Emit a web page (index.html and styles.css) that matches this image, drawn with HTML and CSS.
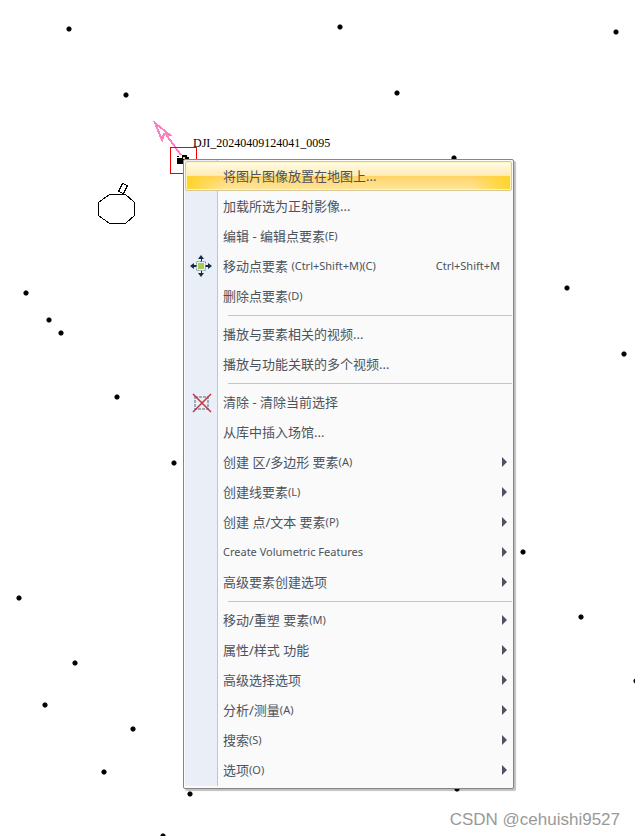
FILE: index.html
```
<!DOCTYPE html>
<html lang="zh-CN">
<head>
  <meta charset="UTF-8">
  <title>地图</title>
  <meta name="viewport" content="width=device-width, initial-scale=1.0">
  <link rel="stylesheet" href="styles.css">
</head>
<body>
  <main class="map">
    <svg class="map-canvas" aria-hidden="true">
      <defs>
        <path id="pt" class="point" d="M-1 -2.500h2l1.500 1.500v2l-1.500 1.500h-2l-1.500-1.500v-2z"/>
      </defs>
      <g id="points"></g>
      <!-- 相机朝向 -->
      <path class="heading" d="M155 123l15 12-6-1-2 6zM165 133l16 22"/>
      <!-- 选中的照片 -->
      <path class="selected" d="M170.500 147.500h26v26h-26z"/>
      <path d="M177 158h6v-1h6v7h-12zM177 156h2v1h-2zM182 155h5v3h-5z"/>
      <path fill="#e8d84a" d="M183 157h2v2h-2z"/>
      <path class="outline" d="M109.500 194.500h16l9 8v13l-9 8h-16l-11-8v-13zM118.500 191.500l4-8 5 2-4 8z"/>
    </svg>
    <div class="photo-name">DJI_20240409124041_0095</div>

    <ul class="menu">
      <li><button class="item active">将图片图像放置在地图上...</button></li>
      <li><button class="item">加载所选为正射影像...</button></li>
      <li><button class="item">编辑 - 编辑点要素<span class="key">(E)</span></button></li>
      <li><button class="item"><svg class="icon" viewBox="0 0 22 22" aria-hidden="true">
          <path fill="#0f2d46" d="M11 0l3 4h-2v3h-1v-3h-3zM11 22l3-4h-2v-3h-1v3h-3zM0 11l4-3v2h3v2h-3v2zM22 11l-4-3v2h-3v2h3v2z"/>
          <path fill="none" stroke="#8796a5" stroke-dasharray="2 1" d="M6.500 6.500h9v9h-9z"/>
          <path fill="#a9cb52" d="M8 8h6v6h-6z"/>
        </svg>移动点要素 <span class="key">(Ctrl+Shift+M)(C)</span><span class="shortcut">Ctrl+Shift+M</span></button></li>
      <li><button class="item">删除点要素<span class="key">(D)</span></button></li>
      <li class="line"></li>
      <li><button class="item">播放与要素相关的视频...</button></li>
      <li><button class="item">播放与功能关联的多个视频...</button></li>
      <li class="line"></li>
      <li><button class="item"><svg class="icon" viewBox="0 0 22 22" aria-hidden="true">
          <path fill="none" stroke="#8294ad" stroke-width="1.500" stroke-dasharray="3 1" d="M5 6h13v12h-13z"/>
          <path fill="none" stroke="#c8333a" stroke-width="1.500" d="M3 3l18 18M21 3l-18 18"/>
        </svg>清除 - 清除当前选择</button></li>
      <li><button class="item">从库中插入场馆...</button></li>
      <li><button class="item sub">创建 区/多边形 要素<span class="key">(A)</span></button></li>
      <li><button class="item sub">创建线要素<span class="key">(L)</span></button></li>
      <li><button class="item sub">创建 点/文本 要素<span class="key">(P)</span></button></li>
      <li><button class="item sub"><span class="latin">Create Volumetric Features</span></button></li>
      <li><button class="item sub">高级要素创建选项</button></li>
      <li class="line"></li>
      <li><button class="item sub">移动/重塑 要素<span class="key">(M)</span></button></li>
      <li><button class="item sub">属性/样式 功能</button></li>
      <li><button class="item sub">高级选择选项</button></li>
      <li><button class="item sub">分析/测量<span class="key">(A)</span></button></li>
      <li><button class="item sub">搜索<span class="key">(S)</span></button></li>
      <li><button class="item sub">选项<span class="key">(O)</span></button></li>
    </ul>

    <div class="watermark">CSDN @cehuishi9527</div>
  </main>

  <script>
    // 航点的屏幕坐标
    var points = [
      [69, 29], [340, 27], [616, 32], [126, 95], [397, 93], [454, 158],
      [26, 293], [49, 320], [61, 333], [117, 397], [174, 463], [567, 288],
      [624, 354], [523, 552], [581, 617], [636, 681], [19, 598], [75, 663],
      [45, 705], [133, 729], [104, 772], [190, 794], [163, 836], [457, 789]
    ];
    var html = '';
    for (var i = 0; i < points.length; i++) {
      html += '<use href="#pt" x="' + points[i][0] + '" y="' + points[i][1] + '"/>';
    }
    document.getElementById('points').innerHTML = html;
  </script>
</body>
</html>
```
FILE: styles.css
```
body {
  margin: 0;
  background-color: #fff;
  font-family: "Noto Sans", "Noto Sans CJK SC", sans-serif;
}

.map {
  position: relative;
  min-height: 100vh;
  overflow: hidden;
}

.map-canvas {
  position: absolute;
  top: 0;
  left: 0;
  width: 100%;
  height: 100%;
  shape-rendering: crispEdges;
}

.point {
  shape-rendering: geometricPrecision;
}

.heading {
  fill: none;
  stroke: #ff80c0;
  stroke-width: 2;
}

.selected {
  fill: none;
  stroke: #f00000;
}

.outline {
  fill: none;
  stroke: #000;
}

.photo-name {
  position: absolute;
  top: 135px;
  left: 193px;
  font-family: "Liberation Serif", serif;
  font-size: 12px;
  line-height: 16px;
  color: #000;
}

.menu {
  position: absolute;
  top: 159px;
  left: 183px;
  width: 329px;
  margin: 0;
  padding: 1px 0 3px;
  list-style: none;
  border: 1px solid #868686;
  border-radius: 2px;
  background: linear-gradient(#c5c5c5, #c5c5c5) 33px 0 / 1px calc(100% - 2px) no-repeat,
    linear-gradient(#e9eef7, #e9eef7) 1px 0 / 32px calc(100% - 2px) no-repeat,
    #fafafa;
  box-shadow: 2px 2px 1px rgba(0, 0, 0, 0.25);
}

.item {
  position: relative;
  display: flex;
  align-items: center;
  width: 100%;
  height: 30px;
  padding: 0 13px 0 39px;
  border: 0;
  background: none;
  font-family: inherit;
  font-size: 13px;
  line-height: 20px;
  color: #4c535c;
  text-align: left;
  white-space: pre;
}

.item.active {
  width: calc(100% - 2px);
  margin: 0 1px;
  padding: 0 11px 0 37px;
  border: 1px solid #d8ca96;
  border-radius: 2px;
  box-shadow: inset 0 0 0 1px #fff4c0;
  background: linear-gradient(#fffdec, #ffeab0) 0 0 / 100% 50% no-repeat,
    linear-gradient(90deg, #ffd42a, transparent 40px, transparent calc(100% - 40px), #ffd42a),
    linear-gradient(#ffd365 50%, #ffe7a0);
}

.key,
.latin,
.shortcut {
  font-size: 11px;
}

.shortcut {
  margin-left: auto;
}

.icon {
  position: absolute;
  top: 4px;
  left: 6px;
  width: 22px;
  height: 22px;
}

.sub::after {
  content: "";
  margin-left: auto;
  margin-right: -7px;
  border: 5px solid transparent;
  border-left-color: #4c535c;
  border-right: 0;
}

.line {
  height: 1px;
  margin: 4px 1px 3px 44px;
  background-color: #c5c5c5;
}

.watermark {
  position: absolute;
  right: 15px;
  bottom: 5px;
  font-family: "Liberation Sans", Arial, sans-serif;
  font-size: 17px;
  line-height: 22px;
  color: #999;
}
```
